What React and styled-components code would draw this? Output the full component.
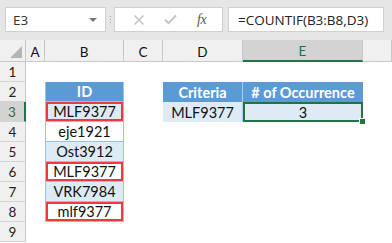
import React from "react";
import styled, { createGlobalStyle, css } from "styled-components";

const Global = createGlobalStyle`
  html, body { margin: 0; padding: 0; background: #ffffff; }
  body { font-family: Lato, "Noto Sans", sans-serif; width: 392px; height: 243px; overflow: hidden; }
`;

const Page = styled.div`
  width: 392px;
  height: 243px;
  display: flex;
  flex-direction: column;
  background: #fff;
`;

const TopBar = styled.div`
  height: 40px;
  background: #e6e6e6;
  display: flex;
  align-items: flex-start;
  padding: 7px 8px 0 5px;
  box-sizing: border-box;
`;

const NameBox = styled.div`
  width: 101px;
  height: 25px;
  box-sizing: border-box;
  background: #fff;
  border: 1px solid #d0d0d0;
  display: flex;
  align-items: center;
  justify-content: space-between;
  padding: 0 8px 0 7px;
  font-family: "Open Sans", Lato, sans-serif;
  font-size: 13.5px;
  color: #333;
`;

const Caret = styled.span`
  width: 0;
  height: 0;
  border-left: 4px solid transparent;
  border-right: 4px solid transparent;
  border-top: 4px solid #777;
`;

const Dots = styled.div`
  width: 8px;
  height: 25px;
  display: flex;
  flex-direction: column;
  align-items: center;
  justify-content: center;
  gap: 2px;
  & > span { width: 1px; height: 1px; background: #aaa; }
`;

const FxButtons = styled.div`
  width: 109px;
  height: 25px;
  box-sizing: border-box;
  background: #fff;
  border: 1px solid #d0d0d0;
  display: flex;
  align-items: center;
  justify-content: space-around;
  padding: 0 6px 0 8px;
  margin-right: 5px;
`;

const FxText = styled.span`
  font-family: "Liberation Serif", serif;
  font-style: italic;
  font-size: 14px;
  color: #555;
  letter-spacing: -0.5px;
`;

const FormulaInput = styled.div`
  flex: 1;
  height: 25px;
  box-sizing: border-box;
  background: #fff;
  border: 1px solid #d0d0d0;
  display: flex;
  align-items: center;
  padding-left: 9px;
  font-family: "Open Sans", Lato, sans-serif;
  font-size: 13.5px;
  color: #222;
`;

const Sheet = styled.div`
  display: grid;
  grid-template-columns: 26px 19px 79px 39px 80px 120px 1fr;
  grid-template-rows: 22px repeat(9, 20px);
  flex: 1;
  background: #fff;
  font-family: Lato, "Noto Sans", sans-serif;
`;

const Corner = styled.div`
  background: #f0f0f0;
  border-right: 1px solid #c8c8c8;
  border-bottom: 1px solid #c8c8c8;
  box-sizing: border-box;
  display: flex;
  align-items: flex-end;
  justify-content: flex-end;
  padding: 0 3px 3px 0;
  &::after {
    content: "";
    width: 0;
    height: 0;
    border-left: 12px solid transparent;
    border-bottom: 12px solid #b5b5b5;
  }
`;

const ColHead = styled.div`
  background: ${(p) => (p.$active ? "#d3d3d3" : "#f0f0f0")};
  border-right: 1px solid #c8c8c8;
  border-bottom: ${(p) => (p.$active ? "2px solid #217346" : "1px solid #c8c8c8")};
  box-sizing: border-box;
  display: flex;
  align-items: center;
  justify-content: center;
  font-size: 13.5px;
  color: ${(p) => (p.$active ? "#217346" : "#111")};
  padding-top: 2px;
`;

const RowHead = styled.div`
  background: ${(p) => (p.$active ? "#d3d3d3" : "#f0f0f0")};
  border-right: ${(p) => (p.$active ? "2px solid #217346" : "1px solid #c8c8c8")};
  border-bottom: 1px solid #d4d4d4;
  box-sizing: border-box;
  display: flex;
  align-items: center;
  justify-content: center;
  font-size: 13.5px;
  color: ${(p) => (p.$active ? "#217346" : "#222")};
`;

const Cell = styled.div`
  box-sizing: border-box;
  display: flex;
  align-items: center;
  justify-content: center;
  font-size: 14.5px;
  color: #111;
  position: relative;
  ${(p) =>
    p.$kind === "head" &&
    css`
      background: #5b9bd5;
      color: #fff;
      font-weight: 700;
    `}
  ${(p) =>
    p.$kind === "band" &&
    css`
      background: #ddebf7;
    `}
  ${(p) =>
    p.$kind === "plain" &&
    css`
      background: #fff;
    `}
  ${(p) =>
    p.$table &&
    css`
      border-left: 1px solid #9bc2e6;
      border-right: 1px solid #9bc2e6;
      border-bottom: 1px solid #9bc2e6;
    `}
  ${(p) =>
    p.$split &&
    css`
      border-right: 1px solid #a9ccec;
    `}
  ${(p) =>
    p.$flag &&
    css`
      box-shadow: inset 0 0 0 2px #f0393e;
    `}
  ${(p) =>
    p.$selected &&
    css`
      box-shadow: inset 0 0 0 2px #217346;
      &::after {
        content: "";
        position: absolute;
        right: -3px;
        bottom: -3px;
        width: 5px;
        height: 5px;
        background: #217346;
        border: 1px solid #fff;
      }
    `}
`;

const Empty = styled.div``;

const ids = [
  { v: "MLF9377", kind: "band", flag: true },
  { v: "eje1921", kind: "plain" },
  { v: "Ost3912", kind: "band" },
  { v: "MLF9377", kind: "plain", flag: true },
  { v: "VRK7984", kind: "band" },
  { v: "mlf9377", kind: "plain", flag: true },
];

const cols = ["A", "B", "C", "D", "E"];

function XIcon() {
  return (
    <svg width="12" height="12" viewBox="0 0 12 12">
      <path d="M1.5 1.5 L10.5 10.5 M10.5 1.5 L1.5 10.5" stroke="#c4c4c4" strokeWidth="1.6" fill="none" />
    </svg>
  );
}

function CheckIcon() {
  return (
    <svg width="13" height="11" viewBox="0 0 13 11">
      <path d="M1 5.8 L4.6 9.2 L12 1.5" stroke="#c4c4c4" strokeWidth="2" fill="none" />
    </svg>
  );
}

export default function App() {
  const rows = [];
  for (let r = 1; r <= 9; r++) {
    rows.push(
      <RowHead key={`rh${r}`} $active={r === 3}>
        {r}
      </RowHead>
    );
    rows.push(<Empty key={`a${r}`} />);
    if (r === 2) {
      rows.push(
        <Cell key={`b${r}`} $kind="head" $table>
          ID
        </Cell>
      );
    } else if (r >= 3 && r <= 8) {
      const d = ids[r - 3];
      rows.push(
        <Cell key={`b${r}`} $kind={d.kind} $table $flag={d.flag}>
          {d.v}
        </Cell>
      );
    } else {
      rows.push(<Empty key={`b${r}`} />);
    }
    rows.push(<Empty key={`c${r}`} />);
    if (r === 2) {
      rows.push(
        <Cell key={`d${r}`} $kind="head" $split>
          Criteria
        </Cell>
      );
      rows.push(
        <Cell key={`e${r}`} $kind="head">
          # of Occurrence
        </Cell>
      );
    } else if (r === 3) {
      rows.push(
        <Cell key={`d${r}`} $kind="band" $split>
          MLF9377
        </Cell>
      );
      rows.push(
        <Cell key={`e${r}`} $kind="band" $selected>
          3
        </Cell>
      );
    } else {
      rows.push(<Empty key={`d${r}`} />);
      rows.push(<Empty key={`e${r}`} />);
    }
    rows.push(<Empty key={`f${r}`} />);
  }

  return (
    <Page>
      <Global />
      <TopBar>
        <NameBox>
          <span>E3</span>
          <Caret />
        </NameBox>
        <Dots>
          <span />
          <span />
          <span />
        </Dots>
        <FxButtons>
          <XIcon />
          <CheckIcon />
          <FxText>fx</FxText>
        </FxButtons>
        <FormulaInput>=COUNTIF(B3:B8,D3)</FormulaInput>
      </TopBar>
      <Sheet>
        <Corner />
        {cols.map((c) => (
          <ColHead key={c} $active={c === "E"}>
            {c}
          </ColHead>
        ))}
        <ColHead />
        {rows}
      </Sheet>
    </Page>
  );
}
